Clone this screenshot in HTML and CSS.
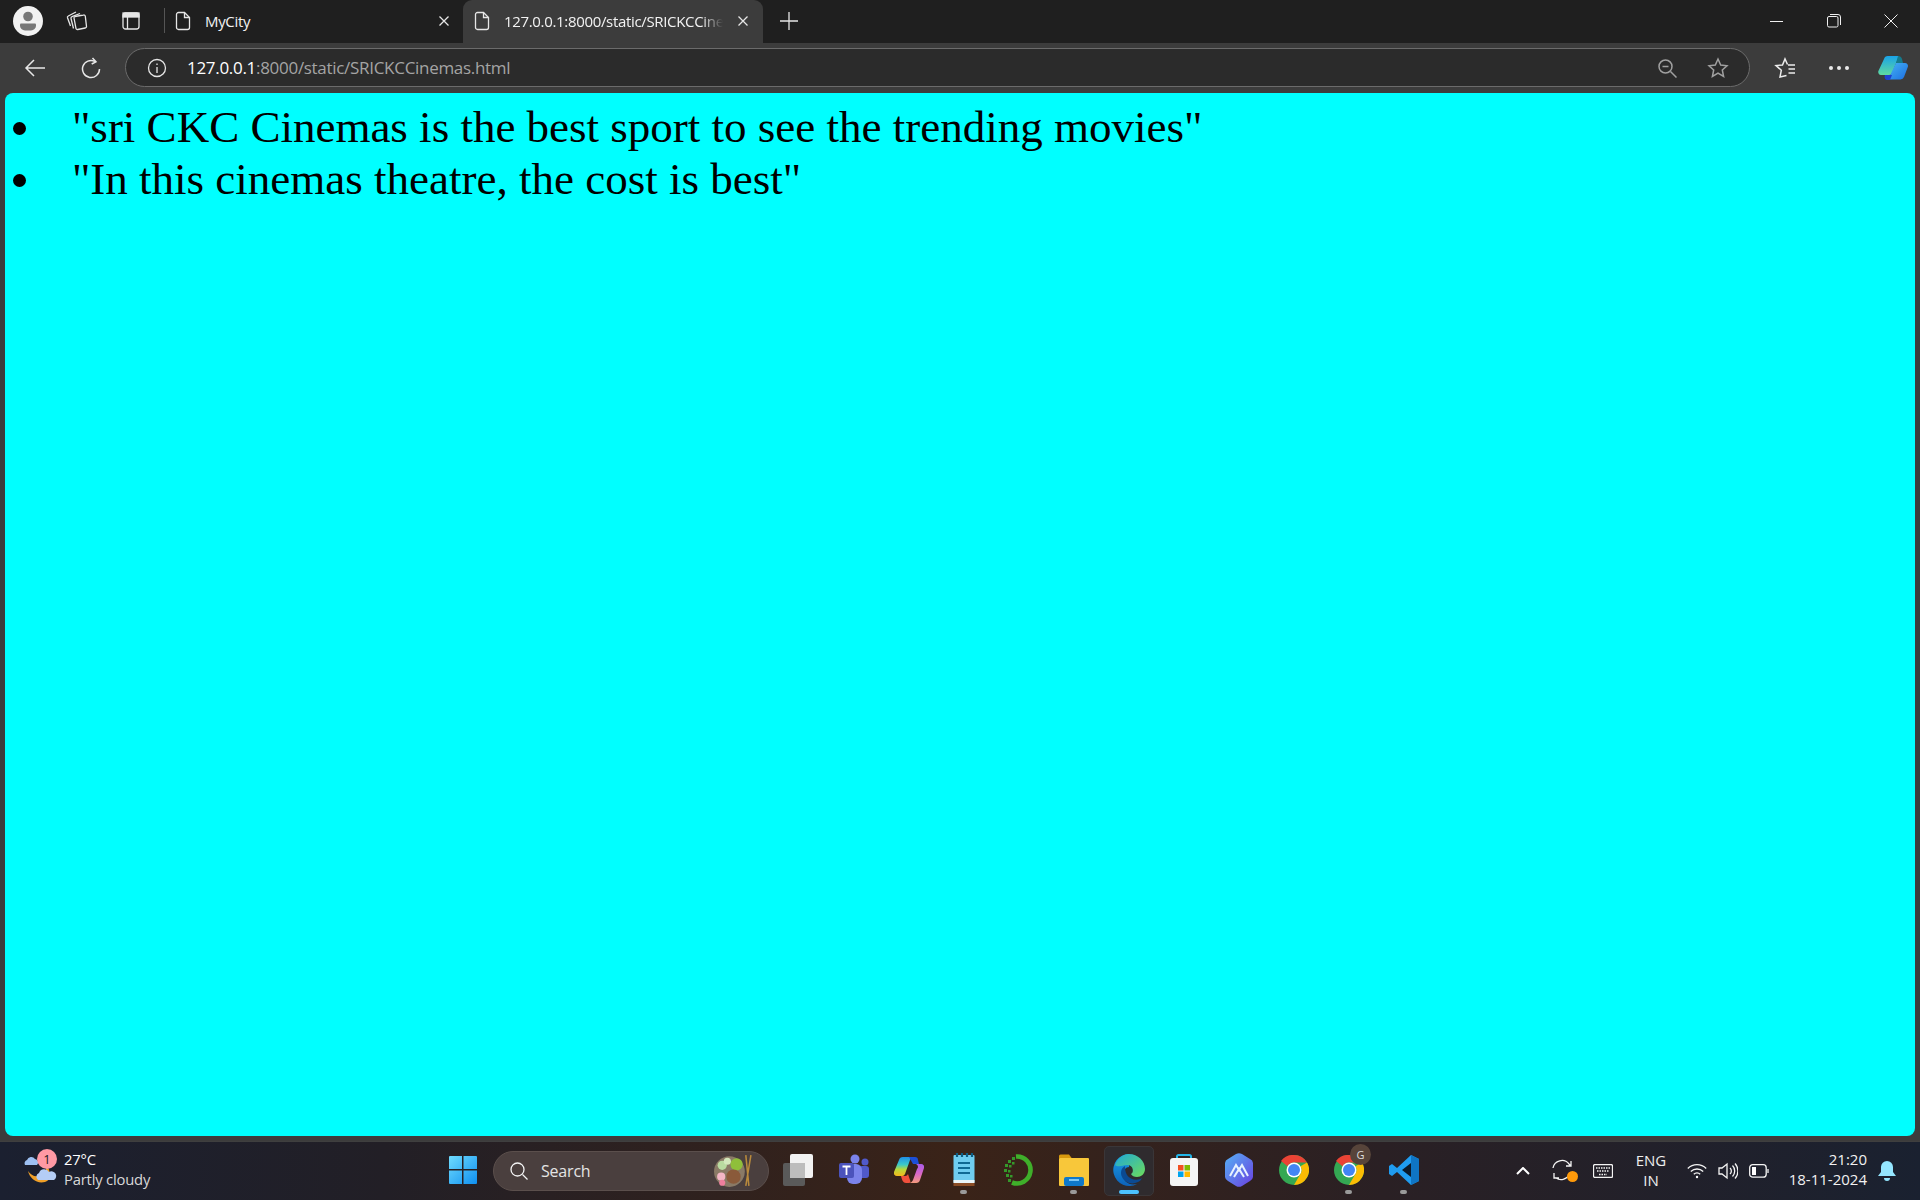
FILE: index.html
```html
<!DOCTYPE html>
<html lang="en">
<head>
<meta charset="utf-8">
<title>SRICKCCinemas</title>
<link rel="stylesheet" href="styles.css">
</head>
<body>
<div class="tabbar">
  <div class="avatar"><svg width="30" height="30" viewBox="0 0 30 30"><circle cx="15" cy="15" r="15" fill="#f2f2f2"/><circle cx="15" cy="10.500" r="4.800" fill="#777"/><path d="M7 18.500a1 1 0 0 1 1-1h14a1 1 0 0 1 1 1v1a5 5 0 0 1-5 5h-6a5 5 0 0 1-5-5z" fill="#777"/></svg></div>
  <div class="tb-icon first"><svg width="22" height="20" viewBox="0 0 22 20" class="line"><path d="M9 5.500l8.500-1.500a1.500 1.500 0 0 1 1.800 1.300l1.200 10a1.500 1.500 0 0 1-1.300 1.700l-7.500 1.500a1.500 1.500 0 0 1-1.800-1.300L8 7a1.500 1.500 0 0 1 1-1.500z"/><path d="M7.500 17.500 5 7.500a1.500 1.500 0 0 1 1-1.800l8-3.200"/><path d="M4.500 15 1.500 6.800a1.500 1.500 0 0 1 .8-1.800L10 1"/></svg></div>
  <div class="tb-icon second"><svg width="18" height="18" viewBox="0 0 18 18" class="line"><rect x="1" y="1" width="16" height="16" rx="2.500"/><rect x="1" y="1" width="16" height="4" fill="#e6e6e6"/><path d="M5.500 5v12"/></svg></div>
  <div class="divider"></div>
  <div class="tab">
    <svg width="16" height="20" viewBox="0 0 16 20" class="line"><path d="M3.500 1.500h6l5 5v10a2 2 0 0 1-2 2h-9a2 2 0 0 1-2-2v-13a2 2 0 0 1 2-2z"/><path d="M9.500 1.500v5h5"/></svg>
    <span class="tab-title">MyCity</span>
    <svg width="12" height="12" viewBox="0 0 12 12" class="line"><path d="M1.500 1.500l9 9M10.500 1.500l-9 9"/></svg>
  </div>
  <div class="tab active">
    <svg width="16" height="20" viewBox="0 0 16 20" class="line"><path d="M3.500 1.500h6l5 5v10a2 2 0 0 1-2 2h-9a2 2 0 0 1-2-2v-13a2 2 0 0 1 2-2z"/><path d="M9.500 1.500v5h5"/></svg>
    <span class="tab-title fade">127.0.0.1:8000/static/SRICKCCinemas.html</span>
    <svg width="12" height="12" viewBox="0 0 12 12" class="line"><path d="M1.500 1.500l9 9M10.500 1.500l-9 9"/></svg>
  </div>
  <div class="newtab"><svg width="18" height="18" viewBox="0 0 18 18" class="line"><path d="M9 0v18M0 9h18"/></svg></div>
  <div class="winctl">
    <svg width="14" height="14" viewBox="0 0 14 14" class="thin"><path d="M0 7.500h13"/></svg>
    <svg width="14" height="14" viewBox="0 0 14 14" class="thin"><rect x=".5" y="2.500" width="10.500" height="10.500" rx="1.500"/><path d="M3 .5h8a2.500 2.500 0 0 1 2.500 2.500v8"/></svg>
    <svg width="14" height="14" viewBox="0 0 14 14" class="thin"><path d="M.5.500l13 13M13.500.500l-13 13"/></svg>
  </div>
</div>

<div class="toolbar">
  <svg class="back" width="22" height="20" viewBox="0 0 22 20"><path d="M21 10H2M10 2l-8 8 8 8"/></svg>
  <svg class="reload" width="20" height="22" viewBox="0 0 20 22"><path d="M14 4.500A8.500 8.500 0 1 0 18.500 12"/><path d="M11.500 1 15 4.800l-4.300 2.200" /></svg>
  <div class="address">
    <svg width="20" height="20" viewBox="0 0 20 20" class="line"><circle cx="10" cy="10" r="8.500"/><path d="M10 9v6M10 5.500v1.500"/></svg>
    <span class="url"><span class="host">127.0.0.1</span>:8000/static/SRICKCCinemas.html</span>
    <svg class="addr-zoom dim" width="20" height="20" viewBox="0 0 20 20"><circle cx="8.500" cy="8.500" r="6.500"/><path d="M13.500 13.500l6 6M5.500 8.500h6"/></svg>
    <svg class="addr-star dim" width="22" height="22" viewBox="0 0 22 22"><path d="M11 2l2.700 6 6.300.7-4.700 4.300 1.300 6.500L11 16.200 5.400 19.500l1.300-6.500L2 8.700 8.300 8z"/></svg>
  </div>
  <svg class="favs" width="22" height="22" viewBox="0 0 22 22"><path d="M12.500 18.500 6 20l1.300-6.700L2 8.500 8.500 8 11 2l2.500 5.500"/><path d="M14 8h7M14.500 12h6.500M14.500 16h6.500"/></svg>
  <div class="dots"><i></i><i></i><i></i></div>
  <svg class="copilot" width="30" height="26" viewBox="0 0 30 26">
    <defs>
      <linearGradient id="cpA" x1="0" y1="0" x2="0" y2="1"><stop offset="0" stop-color="#1aa3e8"/><stop offset="1" stop-color="#5fd8a0"/></linearGradient>
      <linearGradient id="cpB" x1="0" y1="0" x2="1" y2="1"><stop offset="0" stop-color="#45b2f5"/><stop offset="1" stop-color="#1d6fe0"/></linearGradient>
    </defs>
    <path d="M10 1h11l-7 17a3 3 0 0 1-3 2H3a3 3 0 0 1-2.600-4L6 4a4 4 0 0 1 4-3z" fill="url(#cpA)"/>
    <path d="M20 1c2 0 3.500 1 4 3l1 4h-7z" fill="#157a8c"/>
    <path d="M18 8h9a3 3 0 0 1 2.800 4L26 22a4 4 0 0 1-3.500 2.500H10l2-4z" fill="url(#cpB)"/>
    <path d="M7 20h7l-2 5H9c-2 0-3-3-2-5z" fill="#1f3fd0"/>
  </svg>
</div>

<main class="viewport">
  <ul class="list">
    <li>"sri CKC Cinemas is the best sport to see the trending movies"</li>
    <li>"In this cinemas theatre, the cost is best"</li>
  </ul>
</main>

<footer class="taskbar">
  <div class="weather">
    <div class="wx-icon">
      <svg width="34" height="40" viewBox="0 0 34 40"><path d="M4 20c2 8 9 13 17 11 3-1 5-3 5-6 0-7-3-10-3-10 0 0-1 8-8 10-5 1-8-1-11-5z" fill="#f0a028"/><path d="M1 14a3.500 3.500 0 0 1 2-5 4.500 4.500 0 0 1 8-1 3.500 3.500 0 0 1 2 6z" fill="#9dc0f2"/><path d="M14 29a4 4 0 0 1 1-7 5.500 5.500 0 0 1 10-1 4 4 0 0 1 5 8z" fill="#b4cdf6"/></svg>
      <span class="wx-badge">1</span>
    </div>
    <div class="wx-text"><span class="wx-temp">27°C</span><span class="wx-desc">Partly cloudy</span></div>
  </div>
  <div class="task-center">
    <div class="slot">
      <svg width="30" height="30" viewBox="0 0 30 30"><defs><linearGradient id="win" x1="0" y1="0" x2="1" y2="1"><stop offset="0" stop-color="#6fdcff"/><stop offset="1" stop-color="#0f8fef"/></linearGradient></defs><path fill="url(#win)" d="M2 1h12v13H1V2a1 1 0 0 1 1-1zM15.500 1H28a1 1 0 0 1 1 1v12H15.500zM1 15.500h13V29H2a1 1 0 0 1-1-1zM15.500 15.500H29V28a1 1 0 0 1-1 1H15.500z"/></svg>
    </div>
    <div class="search">
      <svg width="20" height="20" viewBox="0 0 20 20" class="line white"><circle cx="8.500" cy="8.500" r="6.500"/><path d="M13.500 13.500l5 5"/></svg>
      <span class="search-label">Search</span>
      <svg class="bowl" width="41" height="41" viewBox="0 0 40 40"><circle cx="16" cy="20" r="15" fill="#8a7a66"/><circle cx="23" cy="13" r="6" fill="#8fbf3a"/><circle cx="9" cy="14" r="4.500" fill="#b9dba0"/><circle cx="14" cy="10" r="3.500" fill="#d3e8bc"/><circle cx="20" cy="25" r="7" fill="#8a5a3a"/><circle cx="8" cy="25" r="4" fill="#f3b6c6"/><circle cx="9" cy="31" r="3" fill="#ee7f9d"/><path d="M32 4l3 30M37 4l-5 30" stroke="#b98a3c" stroke-width="1.500" fill="none"/></svg>
    </div>
    <div class="slot task-view">
      <svg width="34" height="34" viewBox="0 0 34 34"><rect x="1" y="10" width="22" height="23" rx="2" fill="#5a5a5a"/><rect x="8" y="1" width="23" height="24" rx="2" fill="#f2f2f2"/><rect x="8" y="10" width="15" height="15" fill="#bdbdbd"/></svg>
    </div>
    <div class="slot">
      <svg width="32" height="32" viewBox="0 0 32 32"><circle cx="17" cy="5" r="4.500" fill="#7b83eb"/><circle cx="27" cy="8" r="3.500" fill="#5059c9"/><rect x="21" y="12" width="10" height="12" rx="3" fill="#5059c9"/><rect x="9" y="10" width="15" height="20" rx="6" fill="#7b83eb"/><rect x="1" y="9" width="15" height="15" rx="2" fill="#4b53bc"/><path d="M4.500 12.500h8M8.500 12.500V21" stroke="#fff" stroke-width="1.800" fill="none"/></svg>
    </div>
    <div class="slot">
      <svg width="30" height="28" viewBox="0 0 30 28"><defs><linearGradient id="cp2" x1="0" y1="0" x2="0" y2="1"><stop offset="0" stop-color="#1f8fe8"/><stop offset=".4" stop-color="#3cc8c8"/><stop offset=".65" stop-color="#b8d83a"/><stop offset="1" stop-color="#f4b81c"/></linearGradient><linearGradient id="cp3" x1="0" y1="0" x2="0" y2="1"><stop offset="0" stop-color="#a85ce8"/><stop offset=".5" stop-color="#d866c8"/><stop offset="1" stop-color="#f49a7c"/></linearGradient></defs><path d="M9 1h11c-2 0-3 1-4 3l-5 14a3 3 0 0 1-3 2H3a3 3 0 0 1-3-4L5 4a4 4 0 0 1 4-3z" fill="url(#cp2)"/><path d="M15 1h6a3 3 0 0 1 3 3l1 4h-6z" fill="#1c4fd8"/><path d="M20 8h7a3 3 0 0 1 3 4l-4 12a4 4 0 0 1-4 3H14c3 0 4-1 5-3l4-11a3 3 0 0 0-3-5z" fill="url(#cp3)"/><path d="M7 20h4a3 3 0 0 0 3-2l2 6c1 2 0 3-1 3h-3c-3 0-4-3-5-7z" fill="#f0503c"/></svg>
    </div>
    <div class="slot open">
      <svg width="24" height="34" viewBox="0 0 24 34"><rect x="1.500" y="2" width="21" height="28" rx="1" fill="#6fcdf0"/><path d="M5 0v4M10 0v4M15 0v4M20 0v4" stroke="#0d5f86" stroke-width="2.200"/><path d="M6 10h12M6 15h12M6 20h12" stroke="#0f6a94" stroke-width="2.200"/><rect x="1.500" y="27" width="21" height="3" fill="#eaf6fa"/><rect x="1.500" y="30" width="21" height="3" fill="#8a4d26"/></svg>
    </div>
    <div class="slot">
      <svg width="34" height="36" viewBox="0 0 34 36"><path d="M14 4.500A13.500 13.500 0 1 1 10 30.500" fill="none" stroke="#3faf2a" stroke-width="4.600"/><g fill="#35992a"><rect x="10" y="5" width="3" height="3"/><rect x="6" y="8" width="3" height="3"/><rect x="10" y="10" width="2.500" height="2.500"/><rect x="3" y="12" width="3" height="3"/><rect x="7" y="13" width="2.500" height="2.500"/><rect x="2" y="17" width="3" height="3"/><rect x="6" y="18" width="2.500" height="2.500"/><rect x="4" y="22" width="3" height="3"/><rect x="8" y="23" width="2.500" height="2.500"/><rect x="6" y="27" width="3" height="3"/></g></svg>
    </div>
    <div class="slot open">
      <svg width="30" height="32" viewBox="0 0 30 32"><path d="M0 2a1.500 1.500 0 0 1 1.500-1.500H10l3 4H0z" fill="#d99a0e"/><rect x="0" y="4" width="30" height="28" rx="1" fill="#f8c73a"/><rect x="5" y="23" width="20" height="9" rx="2" fill="#0f78c9"/><rect x="10" y="25" width="10" height="2" fill="#7dc7f5"/></svg>
    </div>
    <div class="slot current">
      <svg width="32" height="32" viewBox="0 0 32 32"><defs><linearGradient id="edgeA" x1="0" y1="0" x2="1" y2="1"><stop offset="0" stop-color="#1fa8d8"/><stop offset="1" stop-color="#6ddc5a"/></linearGradient><linearGradient id="edgeB" x1="0" y1="0" x2="0" y2="1"><stop offset="0" stop-color="#1aa0e8"/><stop offset="1" stop-color="#0d62b8"/></linearGradient></defs><path d="M16 0A16 16 0 1 0 24 30c-8 2-14-3-14-9 0-5 3-8 6-8z" fill="url(#edgeB)"/><path d="M2 11C5 4 10 0 16 0c9 0 16 7 16 15 0 5-4 8-8 8-3 0-5-1-6-3 3-1 3-9-4-9-5 0-8 3-12 0z" fill="url(#edgeA)"/><path d="M12 12c-4 2-5 7-3 11 3 6 10 8 16 5 2-1 3-2 4-4-4 3-12 2-15-3-2-3-2-7-2-9z" fill="#0b4a92"/></svg>
      <span class="running"></span>
    </div>
    <div class="slot">
      <svg width="30" height="32" viewBox="0 0 30 32"><path d="M8 6V2.500A1.500 1.500 0 0 1 9.500 1h11A1.500 1.500 0 0 1 22 2.500V6" fill="none" stroke="#22b5e8" stroke-width="2"/><rect x="1" y="4" width="28" height="28" rx="3" fill="#f5f5f5"/><rect x="9" y="11" width="5.500" height="5.500" fill="#f25022"/><rect x="15.500" y="11" width="5.500" height="5.500" fill="#7fba00"/><rect x="9" y="17.500" width="5.500" height="5.500" fill="#00a4ef"/><rect x="15.500" y="17.500" width="5.500" height="5.500" fill="#ffb900"/></svg>
    </div>
    <div class="slot">
      <svg width="28" height="34" viewBox="0 0 28 34"><defs><linearGradient id="hexg" x1="0" y1="0" x2="1" y2="1"><stop offset="0" stop-color="#55b2f5"/><stop offset="1" stop-color="#6a3fe0"/></linearGradient></defs><path d="M11 1a6 6 0 0 1 6 0l8 5a5 5 0 0 1 3 4v14a5 5 0 0 1-3 4l-8 5a6 6 0 0 1-6 0l-8-5a5 5 0 0 1-3-4V10a5 5 0 0 1 3-4z" fill="url(#hexg)"/><path d="M5 23 11 12l3 5 3-5 6 11M9 24l5-8 5 8" fill="none" stroke="#e8f2ff" stroke-width="2"/></svg>
    </div>
    <div class="slot">
      <svg width="30" height="30" viewBox="0 0 30 30"><use href="#chromeMark"/></svg>
    </div>
    <div class="slot open g-badge">
      <svg width="30" height="30" viewBox="0 0 30 30"><defs><g id="chromeMark"><circle cx="15" cy="15" r="15" fill="#34a853"/><path d="M15 0a15 15 0 0 1 13 7.500H15a7.500 7.500 0 0 0-6.500 3.750L2 6A15 15 0 0 1 15 0z" fill="#ea4335"/><path d="M28 7.500A15 15 0 0 1 15 30l6.500-11.250A7.500 7.500 0 0 0 21.500 11.250z" fill="#fbbc04"/><circle cx="15" cy="15" r="7.500" fill="#fff"/><circle cx="15" cy="15" r="6" fill="#4285f4"/></g></defs><use href="#chromeMark"/></svg>
      <span class="profile">G</span>
    </div>
    <div class="slot open">
      <svg width="32" height="32" viewBox="0 0 32 32"><path d="M23 1 31 5v22l-8 4L9 18l-5 4-3-2v-8l3-2 5 4z" fill="#1f9cf0"/><path d="M23 9 14 16l9 7z" fill="#0c1a2a"/><path d="M23 1 31 5v22l-8 4z" fill="#0f75c4"/></svg>
    </div>
  </div>
  <div class="tray">
    <svg class="chev" width="14" height="8" viewBox="0 0 14 8"><path d="M1 7l6-6 6 6"/></svg>
    <div class="sync"><svg width="24" height="24" viewBox="0 0 24 24" class="line white"><path d="M2 9a9 9 0 0 1 16-4l2 2M20 2v5h-5"/><path d="M18 16a9 9 0 0 1-13 3M3 14v5h5"/></svg><span class="sync-dot"></span></div>
    <svg class="kbd line white" width="20" height="14" viewBox="0 0 20 14"><rect x=".5" y=".5" width="19" height="13" rx="1.500"/><path d="M3 4h14M4 7h12M6 10.500h8" stroke-dasharray="1.500 1"/></svg>
    <div class="lang"><span>ENG</span><span>IN</span></div>
    <svg class="wifi line white" width="20" height="16" viewBox="0 0 20 16"><path d="M.8 5.500a13 13 0 0 1 18.400 0M3.800 8.500a9 9 0 0 1 12.400 0M6.800 11.300a4.500 4.500 0 0 1 6.400 0"/><circle cx="10" cy="14" r="1.200" fill="#fff" stroke="none"/></svg>
    <svg class="vol line white" width="20" height="18" viewBox="0 0 20 18"><path d="M1 6h3l5-4v14l-5-4H1z"/><path d="M12 6a4 4 0 0 1 0 6M14.500 3.500a8 8 0 0 1 0 11M17 1.500a11 11 0 0 1 0 15"/></svg>
    <svg class="batt line white" width="20" height="14" viewBox="0 0 20 14"><rect x=".7" y=".7" width="16.500" height="12.500" rx="3"/><rect x="3" y="3" width="4" height="8" fill="#fff" stroke="none"/><path d="M19 5v4"/></svg>
    <div class="clock"><span>21:20</span><span>18-11-2024</span></div>
    <svg class="bell" width="18" height="20" viewBox="0 0 18 20"><path d="M9 0a6 6 0 0 1 6 6v5l3 4H0l3-4V6a6 6 0 0 1 6-6z" fill="#94e6ff"/><path d="M6 17h6a3 3 0 0 1-6 0z" fill="#94e6ff"/></svg>
  </div>
</footer>
</body>
</html>
```
FILE: styles.css
```css
* { box-sizing: border-box; }
html, body { margin: 0; height: 100%; }
body {
  width: 1920px;
  height: 1200px;
  overflow: hidden;
  display: flex;
  flex-direction: column;
  background: #3c3c3c;
  color: #fff;
  font-family: "Open Sans", "Noto Sans", sans-serif;
}
svg { display: block; flex: none; }
.line { fill: none; stroke: #e6e6e6; stroke-width: 1.300; }
.line.white { stroke: #f4f4f4; }
.thin { fill: none; stroke: #f0f0f0; stroke-width: 1; }
.dim { fill: none; stroke: #a0a0a0; stroke-width: 1.500; }

.tabbar {
  height: 43px;
  flex: none;
  background: #1f1f1f;
  display: flex;
  align-items: center;
  padding-bottom: 2px;
}
.avatar { margin-left: 13px; }
.tb-icon.first { margin-left: 23px; }
.tb-icon.second { margin-left: 34px; }
.divider { width: 1px; height: 25px; background: #555; margin-left: 24px; }
.tab {
  width: 298px;
  height: 43px;
  align-self: flex-start;
  display: flex;
  align-items: center;
  gap: 14px;
  padding: 0 13px 2px 10px;
}
.tab .tab-title { flex: 1; min-width: 0; }
.tab.active {
  width: 300px;
  background: #3c3c3c;
  border-radius: 9px 9px 0 0;
  padding: 0 14px 2px 11px;
}
.tab-title {
  font-size: 15px;
  letter-spacing: -0.33px;
  white-space: nowrap;
  overflow: hidden;
  color: #f2f2f2;
}
.fade {
  -webkit-mask-image: linear-gradient(90deg, #000 90%, transparent 100%);
  mask-image: linear-gradient(90deg, #000 90%, transparent 100%);
}
.newtab { margin-left: 17px; }
.winctl {
  margin-left: auto;
  display: flex;
  gap: 43px;
  padding-right: 22px;
}

.toolbar {
  height: 50px;
  flex: none;
  background: #3c3c3c;
  display: flex;
  align-items: center;
  padding-bottom: 1px;
}
.back { margin-left: 24px; fill: none; stroke: #e8e8e8; stroke-width: 1.500; }
.reload { margin-left: 35px; fill: none; stroke: #e8e8e8; stroke-width: 1.500; }
.address {
  margin-left: 24px;
  width: 1625px;
  height: 39px;
  border: 1px solid #6b6b6b;
  border-radius: 20px;
  background: #2b2b2b;
  display: flex;
  align-items: center;
  padding-left: 21px;
}
.url {
  margin-left: 20px;
  font-size: 17px;
  letter-spacing: -0.3px;
  color: #a4a4a4;
  white-space: nowrap;
}
.host { color: #fff; }
.addr-zoom { margin-left: auto; }
.addr-star { margin: 0 20px 0 30px; }
.favs { margin-left: 24px; fill: none; stroke: #ececec; stroke-width: 1.500; }
.dots { display: flex; gap: 4px; margin-left: 33px; }
.dots i { width: 4px; height: 4px; border-radius: 50%; background: #eaeaea; }
.copilot { margin-left: 29px; }

.viewport {
  flex: none;
  height: 1043px;
  margin: 0 5px;
  width: 1910px;
  background: #00ffff;
  border-radius: 8px;
  color: #000;
  font-family: "Liberation Serif", "Times New Roman", serif;
  font-size: 45px;
  padding-top: 8px;
}
.list { margin: 0; padding: 0 0 0 8px; list-style: none; }
.list li { display: flex; align-items: center; gap: 46px; }
.list li::before {
  content: "";
  flex: none;
  width: 13px;
  height: 13px;
  margin-top: 2px;
  border-radius: 50%;
  background: #000;
}

.taskbar {
  flex: 1;
  margin-top: 5px;
  border-top: 1px solid #3f3f3f;
  background: linear-gradient(90deg, #1b2030 0%, #221f26 20%, #3a2318 50%, #2a2024 72%, #1a2130 100%);
  display: flex;
  align-items: center;
}
.weather { display: flex; align-items: center; flex: none; margin-left: 24px; width: 411px; }
.wx-icon { position: relative; width: 34px; height: 40px; }
.wx-badge {
  position: absolute;
  left: 13px;
  top: -2px;
  width: 20px;
  height: 20px;
  border-radius: 50%;
  background: #ff99a4;
  color: #1b1b1b;
  font-size: 13px;
  line-height: 20px;
  text-align: center;
}
.wx-text { display: flex; flex-direction: column; margin: -4px 0 0 6px; font-size: 14.800px; line-height: 20px; letter-spacing: -0.2px; }
.wx-desc { color: #d8d8d8; }

.task-center { display: flex; align-items: center; flex: none; height: 58px; }
.slot {
  width: 55px;
  height: 50px;
  flex: none;
  display: flex;
  align-items: center;
  justify-content: center;
  position: relative;
  border-radius: 5px;
  padding-bottom: 2px;
}
.slot.open::after {
  content: "";
  position: absolute;
  left: 24px;
  bottom: 2px;
  width: 7px;
  height: 4px;
  border-radius: 2px;
  background: #9a9a9a;
}
.slot.current { width: 50px; margin: 0 2.500px; background: #2f2b2e; border: 1px solid #3a3638; }
.running {
  position: absolute;
  left: 14px;
  bottom: 1px;
  width: 20px;
  height: 4px;
  border-radius: 2px;
  background: #4cc2ff;
}
.search {
  width: 276px;
  height: 40px;
  margin-left: 3px;
  border-radius: 20px;
  border: 1px solid #5b4f4c;
  background: #4a3f3e;
  display: flex;
  align-items: center;
  padding-left: 15px;
  flex: none;
}
.search-label { margin-left: 12px; font-size: 16px; letter-spacing: -0.2px; color: #e4e4e4; }
.bowl { margin-left: auto; margin-right: 14px; }
.task-view { margin-left: 2px; }

.tray { flex: 1; display: flex; align-items: center; }
.chev { margin-left: 85px; fill: none; stroke: #fff; stroke-width: 2; }
.sync { position: relative; margin-left: 21px; }
.sync-dot { position: absolute; right: -3px; bottom: 1px; width: 11px; height: 11px; border-radius: 50%; background: #ff9a0a; }
.kbd { margin-left: 18px; }
.lang { width: 40px; margin: -2px 0 0 18px; display: flex; flex-direction: column; align-items: center; font-size: 15px; line-height: 20px; color: #eee; }
.wifi { margin-left: 16px; }
.vol { margin-left: 11px; }
.batt { margin-left: 11px; }
.clock { width: 88px; margin: -4px 0 0 10px; display: flex; flex-direction: column; align-items: flex-end; font-size: 15px; line-height: 20px; color: #f2f2f2; white-space: nowrap; }
.bell { margin-left: 11px; }
.g-badge .profile {
  position: absolute;
  left: 29px;
  top: -2px;
  width: 21px;
  height: 21px;
  border-radius: 50%;
  background: #57443a;
  color: #ddd;
  font-size: 11px;
  line-height: 21px;
  text-align: center;
}
```
